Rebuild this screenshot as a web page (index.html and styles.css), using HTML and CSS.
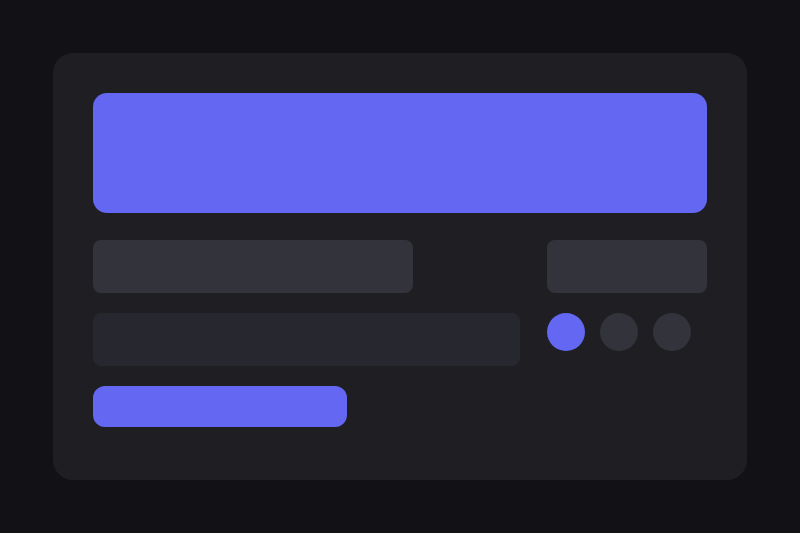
FILE: index.html
```html
<!DOCTYPE html>
<html lang="en">
<head>
    <meta charset="UTF-8">
    <meta name="viewport" content="width=device-width, initial-scale=1.0">
    <title>Skeleton</title>
    <link rel="stylesheet" href="styles.css">
</head>
<body>
<div class="card">
    <div class="hero"></div>
    <div class="row">
        <div class="bar bar-wide"></div>
        <div class="bar bar-short"></div>
    </div>
    <div class="row row-dots">
        <div class="bar bar-dim"></div>
        <div class="dots">
            <span class="dot dot-active"></span>
            <span class="dot"></span>
            <span class="dot"></span>
        </div>
    </div>
    <div class="button"></div>
</div>
</body>
</html>
```

FILE: styles.css
```css
/* General Styles */
html, body {
    margin: 0;
    height: 100%;
}

body {
    background-color: #111116;
    font-family: "Liberation Sans", Arial, sans-serif;
    padding: 53px;
    box-sizing: border-box;
}

.card {
    width: 694px;
    height: 427px;
    box-sizing: border-box;
    padding: 40px;
    background-color: #1e1e23;
    border-radius: 20px;
}

.hero {
    height: 120px;
    background-color: #6467f2;
    border-radius: 14px;
}

.row {
    display: flex;
    justify-content: space-between;
    margin-top: 27px;
}

.row-dots {
    margin-top: 20px;
    justify-content: flex-start;
    gap: 27px;
}

.bar {
    height: 53px;
    background-color: #33343b;
    border-radius: 8px;
}

.bar-wide {
    width: 320px;
}

.bar-short {
    width: 160px;
}

.bar-dim {
    width: 427px;
    background-color: #27282f;
}

.dots {
    display: flex;
    gap: 15px;
}

.dot {
    width: 38px;
    height: 38px;
    border-radius: 50%;
    background-color: #33343b;
}

.dot-active {
    background-color: #6467f2;
}

.button {
    width: 254px;
    height: 41px;
    margin-top: 20px;
    background-color: #6467f2;
    border-radius: 12px;
}
```
